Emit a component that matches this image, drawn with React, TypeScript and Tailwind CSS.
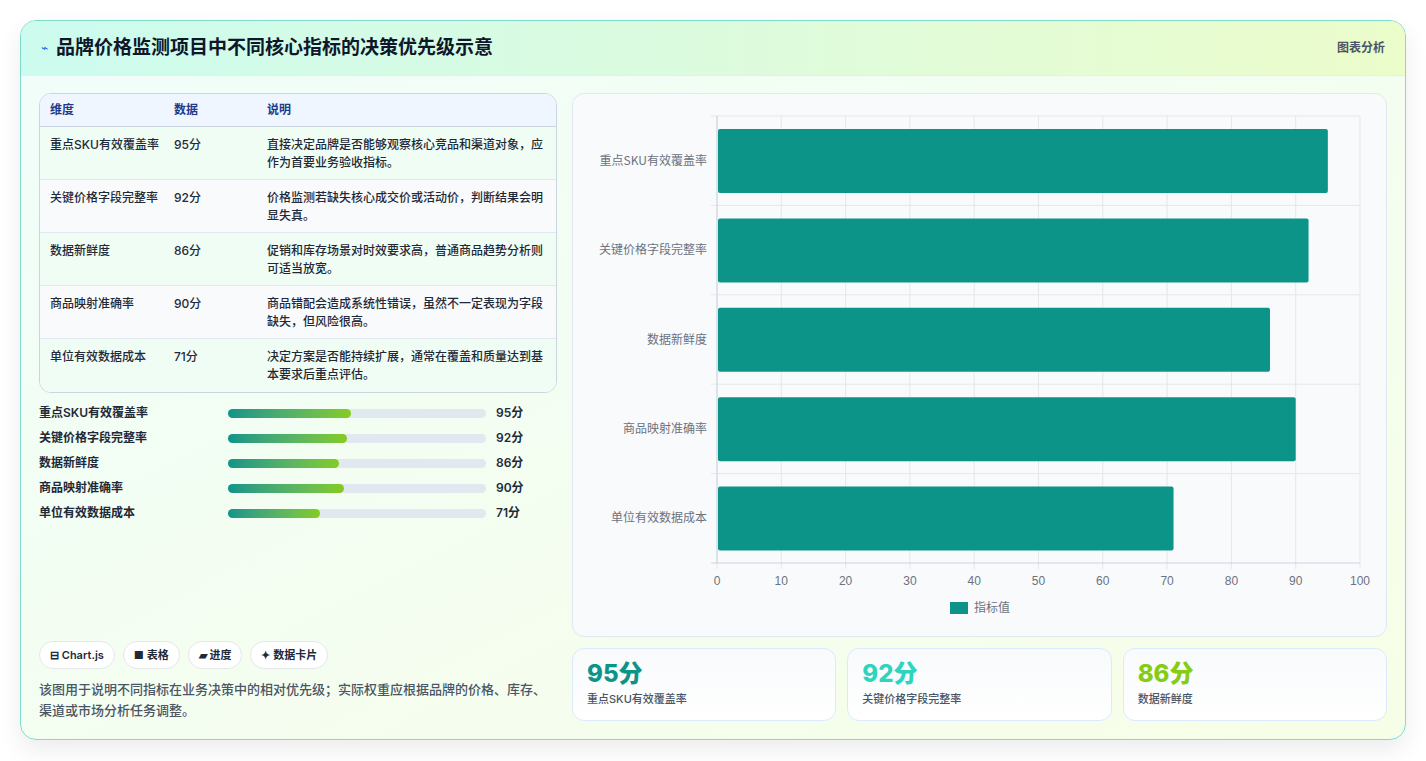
import React from "react";

const rows = [
  ["重点SKU有效覆盖率", "95分", "直接决定品牌是否能够观察核心竞品和渠道对象，应作为首要业务验收指标。"],
  ["关键价格字段完整率", "92分", "价格监测若缺失核心成交价或活动价，判断结果会明显失真。"],
  ["数据新鲜度", "86分", "促销和库存场景对时效要求高，普通商品趋势分析则可适当放宽。"],
  ["商品映射准确率", "90分", "商品错配会造成系统性错误，虽然不一定表现为字段缺失，但风险很高。"],
  ["单位有效数据成本", "71分", "决定方案是否能持续扩展，通常在覆盖和质量达到基本要求后重点评估。"],
];
const vals = [95, 92, 86, 90, 71];

function Chart() {
  const x0 = 144, x1 = 787, y0 = 22, y1 = 469;
  const band = (y1 - y0) / 5;
  const w = x1 - x0;
  return (
    <svg width="813" height="543" className="block">
      {Array.from({ length: 11 }).map((_, i) => {
        const x = x0 + (w * i) / 10;
        return (
          <g key={i}>
            <line x1={x} x2={x} y1={y0} y2={y1 + 6} stroke="#e5e7eb" />
            <text x={x} y={y1 + 22} textAnchor="middle" fontSize="12" fill="#6b7280" fontFamily="Liberation Sans, sans-serif">{i * 10}</text>
          </g>
        );
      })}
      {Array.from({ length: 6 }).map((_, i) => (
        <line key={i} x1={x0 - 6} x2={x1} y1={y0 + band * i} y2={y0 + band * i} stroke={i === 5 ? "#cbd5e1" : "#e5e7eb"} />
      ))}
      <line x1={x0} x2={x0} y1={y0} y2={y1} stroke="#cbd5e1" />
      {rows.map((r, i) => (
        <g key={i}>
          <rect x={x0 + 1} y={y0 + band * i + 13} width={(w * vals[i]) / 100 - 1} height={64} rx="2" fill="#0d9488" />
          <text x={x0 - 10} y={y0 + band * i + band / 2 + 4} textAnchor="end" fontSize="12" fill="#6b7280" fontFamily="Noto Sans CJK SC, sans-serif">{r[0]}</text>
        </g>
      ))}
      <rect x="377" y="508" width="18" height="12" fill="#0d9488" />
      <text x="401" y="518" fontSize="12" fill="#6b7280" fontFamily="Noto Sans CJK SC, sans-serif">指标值</text>
    </svg>
  );
}

export default function App() {
  return (
    <div className="min-h-[761px] bg-white p-5 pb-5" style={{ fontFamily: "Inter, 'Noto Sans CJK SC', sans-serif" }}>
      <div className="rounded-2xl border border-[#7fdccb] overflow-hidden bg-gradient-to-br from-[#f0fdfa] to-[#f7fee7] shadow-[0_10px_25px_rgba(0,0,0,0.08)]">
        <div className="h-[55px] flex items-center justify-between px-5 bg-gradient-to-r from-[#ccfbef] to-[#ecfccb] border-b border-[#d1fae5]">
          <div className="flex items-center gap-2">
            <span className="text-[#2563eb] text-xs">⌁</span>
            <span className="text-[19px] font-bold text-[#0f172a]">品牌价格监测项目中不同核心指标的决策优先级示意</span>
          </div>
          <span className="text-xs font-semibold text-gray-600">图表分析</span>
        </div>
        <div className="flex gap-[15px] px-[18px] pt-[17px] pb-[18px]">
          <div className="w-[520px] flex flex-col">
            <div className="rounded-xl border border-[#cbd5e1] overflow-hidden bg-white text-xs">
              <div className="flex h-[33px] items-center bg-[#eff6ff] border-b border-[#cbd5e1] font-semibold text-[#1e3a8a]">
                <div className="w-[134px] pl-[10px]">维度</div>
                <div className="w-[93px]">数据</div>
                <div>说明</div>
              </div>
              {rows.map((r, i) => (
                <div key={i} className={`flex h-[53px] pt-[9px] leading-[18px] text-[#1f2937] font-medium ${i % 2 ? "bg-[#f8fafc]" : "bg-[#f0fdf4]"} ${i < 4 ? "border-b border-[#e2e8f0]" : ""}`}>
                  <div className="w-[134px] pl-[10px] pr-2">{r[0]}</div>
                  <div className="w-[93px]">{r[1]}</div>
                  <div className="flex-1 pr-3">{r[2]}</div>
                </div>
              ))}
            </div>
            <div className="mt-[12px] flex flex-col gap-[9px]">
              {rows.map((r, i) => (
                <div key={i} className="flex items-center h-[16px] text-xs font-semibold text-[#1f2937]">
                  <div className="w-[189px]">{r[0]}</div>
                  <div className="w-[258px] h-[9px] rounded-full bg-[#e2e8f0]">
                    <div className="h-full rounded-full bg-gradient-to-r from-[#0d9488] to-[#84cc16]" style={{ width: `${vals[i] / 2}%` }} />
                  </div>
                  <div className="ml-[10px]">{r[1]}</div>
                </div>
              ))}
            </div>
            <div className="flex-1" />
            <div className="flex gap-2 text-[11px] font-semibold text-[#1f2937]">
              {["⊟ Chart.js", "■ 表格", "▰ 进度", "✦ 数据卡片"].map((t) => (
                <span key={t} className="h-[28px] px-[10px] flex items-center rounded-full bg-white border border-[#e5e7eb]">{t}</span>
              ))}
            </div>
            <p className="mt-[10px] text-[13px] leading-[21px] text-gray-600 font-medium">该图用于说明不同指标在业务决策中的相对优先级；实际权重应根据品牌的价格、库存、渠道或市场分析任务调整。</p>
          </div>
          <div className="flex-1 flex flex-col gap-[11px]">
            <div className="rounded-xl border border-[#e2e8f0] bg-[#f8fafc] h-[544px]">
              <Chart />
            </div>
            <div className="grid grid-cols-3 gap-[11px]">
              {[["95分", "text-[#0d9488]", rows[0][0]], ["92分", "text-[#2dd4bf]", rows[1][0]], ["86分", "text-[#84cc16]", rows[2][0]]].map(([v, c, l]) => (
                <div key={v} className="h-[73px] rounded-xl border border-[#dbeafe] bg-gradient-to-b from-[#f8fafc] to-white px-[14px] pt-[10px]">
                  <div className={`text-[24px] font-extrabold leading-[30px] ${c}`}>{v}</div>
                  <div className="text-[11px] font-medium text-gray-600 mt-[2px]">{l}</div>
                </div>
              ))}
            </div>
          </div>
        </div>
      </div>
    </div>
  );
}
